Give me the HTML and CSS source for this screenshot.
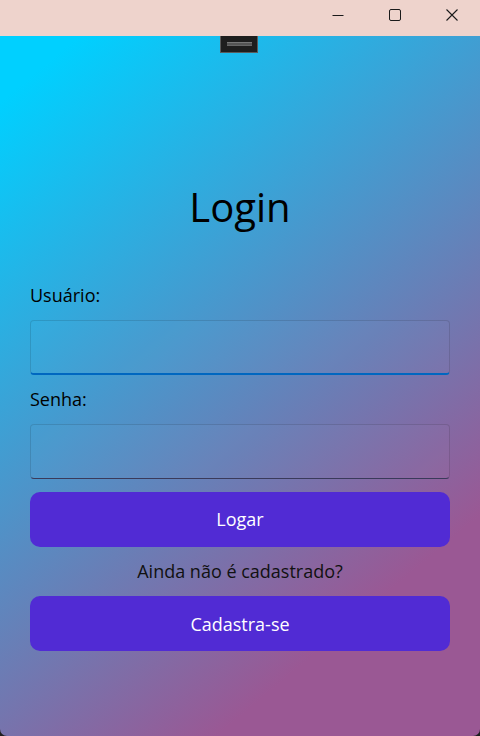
FILE: index.html
```html
<!DOCTYPE html>
<html lang="pt-BR">
<head>
<meta charset="utf-8">
<title>Login</title>
<link rel="stylesheet" href="styles.css">
</head>
<body>
<div class="window">
  <header class="titlebar">
    <div class="caption">
      <button class="cap-btn" aria-label="Minimizar">
        <svg width="12" height="12" viewBox="0 0 12 12"><path d="M0.5 6.5h11" stroke="#1a1a1a" stroke-width="1" fill="none"/></svg>
      </button>
      <button class="cap-btn" aria-label="Maximizar">
        <svg width="12" height="12" viewBox="0 0 12 12"><rect x="0.5" y="0.5" width="11" height="11" rx="1.5" stroke="#1a1a1a" stroke-width="1" fill="none"/></svg>
      </button>
      <button class="cap-btn" aria-label="Fechar">
        <svg width="12" height="12" viewBox="0 0 12 12"><path d="M0.5 0.5l11 11M11.5 0.5l-11 11" stroke="#1a1a1a" stroke-width="1.1" fill="none"/></svg>
      </button>
    </div>
  </header>
  <main class="content">
    <div class="handle"><span class="handle-bar"></span></div>
    <h1 class="title">Login</h1>
    <form class="form">
      <label class="label" for="user">Usuário:</label>
      <div class="entry entry-focused"><input id="user" type="text"></div>
      <label class="label" for="pass">Senha:</label>
      <div class="entry"><input id="pass" type="password"></div>
      <button type="button" class="btn">Logar</button>
      <p class="hint">Ainda não é cadastrado?</p>
      <button type="button" class="btn">Cadastra-se</button>
    </form>
  </main>
</div>
</body>
</html>
```

FILE: styles.css
```css
* { box-sizing: border-box; }
html, body {
  margin: 0;
  padding: 0;
  width: 480px;
  height: 736px;
  background: #1f1f1f;
  font-family: "Open Sans", "Noto Sans", sans-serif;
  overflow: hidden;
}
.window {
  width: 480px;
  height: 736px;
  display: flex;
  flex-direction: column;
  border-radius: 0 0 7px 7px;
  overflow: hidden;
}
.titlebar {
  height: 36px;
  flex: 0 0 36px;
  background: #eed3cc;
  display: flex;
  justify-content: flex-end;
}
.caption { display: flex; }
.cap-btn {
  width: 57px;
  height: 36px;
  border: 0;
  padding: 0;
  margin: 0;
  background: transparent;
  display: flex;
  align-items: center;
  justify-content: center;
}
.cap-btn svg { display: block; margin-top: -6px; }
.content {
  position: relative;
  flex: 1;
  background: linear-gradient(140deg, #00d0ff 6%, #9a5894 80%);
  padding: 144px 30px 0;
}
.handle {
  position: absolute;
  top: 0;
  left: 220px;
  width: 38px;
  height: 17px;
  background: #1e1e1e;
  border: 1px solid #5a5a5a;
  border-top: 0;
  display: flex;
  align-items: center;
  justify-content: center;
}
.handle-bar {
  width: 25px;
  height: 4px;
  background: #555;
  border-top: 1px solid #777;
  border-bottom: 1px solid #666;
}
.title {
  margin: 0;
  text-align: center;
  font-size: 40px;
  font-weight: 400;
  line-height: 54.5px;
  color: #000;
}
.form {
  margin-top: 48px;
  display: flex;
  flex-direction: column;
  gap: 12.5px;
}
.label {
  font-size: 18px;
  line-height: 24.5px;
  color: #000;
}
.entry {
  height: 55px;
  border: 1px solid rgba(0, 0, 0, 0.12);
  border-bottom: 1px solid #3a3a5a;
  border-radius: 4px;
  background: rgba(255, 255, 255, 0.02);
}
.entry-focused {
  border-bottom: 2px solid #0067c0;
}
.entry input {
  width: 100%;
  height: 100%;
  border: 0;
  background: transparent;
  outline: none;
  font: inherit;
  font-size: 16px;
  padding: 0 10px;
}
.btn {
  height: 55px;
  border: 0;
  border-radius: 10px;
  background: #512bd4;
  color: #fff;
  font-family: inherit;
  font-size: 18px;
  padding: 0;
}
.hint {
  margin: 0;
  text-align: center;
  font-size: 18px;
  line-height: 24.5px;
  color: #111;
}
```
